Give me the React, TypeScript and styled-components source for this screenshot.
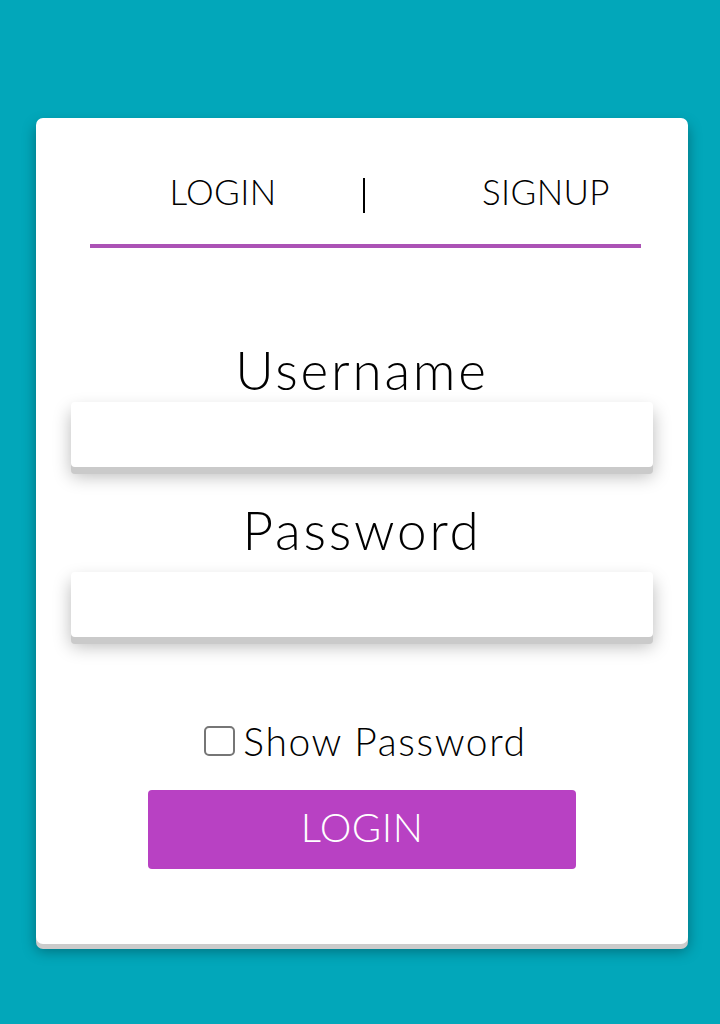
import React, { useState } from "react";
import styled, { createGlobalStyle } from "styled-components";

const Global = createGlobalStyle`
  html, body {
    margin: 0;
    padding: 0;
    background: #02a7ba;
  }
  body {
    font-family: Lato, "Noto Sans", sans-serif;
    color: #000;
  }
  * { box-sizing: border-box; }
`;

const Page = styled.div`
  min-height: 1024px;
  padding: 118px 32px 0 36px;
`;

const Card = styled.div`
  width: 652px;
  height: 826px;
  background: #fff;
  border-radius: 7px;
  box-shadow: 0 5px 0 #cbcbcb, 0 7px 14px rgba(0, 0, 0, 0.35);
  display: flex;
  flex-direction: column;
  align-items: center;
`;

const TabBar = styled.div`
  align-self: stretch;
  margin: 0 47px 0 54px;
  padding: 56px 0 31px;
  border-bottom: 4px solid #ab52b5;
  display: grid;
  grid-template-columns: 266px 2px 1fr;
  column-gap: 7px;
  align-items: start;
`;

const Tab = styled.button<{ $align: "center" | "end" }>`
  justify-self: ${(p) => p.$align};
  margin-right: ${(p) => (p.$align === "end" ? "31px" : "0")};
  padding: 0;
  border: none;
  background: none;
  font-family: inherit;
  font-weight: 300;
  font-size: 35px;
  line-height: 35px;
  letter-spacing: 0.4px;
  color: #000;
  cursor: pointer;
`;

const Divider = styled.span`
  margin-top: 4px;
  width: 2px;
  height: 35px;
  background: #000;
`;

const FieldLabel = styled.label<{ $gap: number }>`
  margin-top: ${(p) => p.$gap}px;
  font-size: 53px;
  line-height: 53px;
  font-weight: 300;
  letter-spacing: 2.8px;
`;

const Input = styled.input<{ $gap: number }>`
  margin-top: ${(p) => p.$gap}px;
  width: 582px;
  height: 65px;
  border: none;
  border-radius: 4px;
  background: #fff;
  outline: none;
  padding: 0 16px;
  font-family: inherit;
  font-size: 28px;
  box-shadow: 0 7px 0 #cacaca, 0 9px 18px rgba(0, 0, 0, 0.28);
`;

const CheckRow = styled.label`
  margin: 89px 0 0 7px;
  height: 30px;
  display: flex;
  align-items: center;
  gap: 8px;
  font-size: 39px;
  font-weight: 300;
  line-height: 30px;
  letter-spacing: 1.6px;
  cursor: pointer;
`;

const Check = styled.input`
  appearance: none;
  margin: 0;
  width: 31px;
  height: 30px;
  border: 2px solid #767676;
  border-radius: 5px;
  background: #fff;
  cursor: pointer;
  &:checked {
    background: #b841c3;
    border-color: #b841c3;
  }
`;

const SubmitButton = styled.button`
  margin-top: 34px;
  width: 428px;
  height: 79px;
  border: none;
  border-radius: 4px;
  background: #b841c3;
  color: #fff;
  font-family: inherit;
  font-size: 40px;
  font-weight: 300;
  line-height: 1;
  letter-spacing: 0.5px;
  padding: 0 0 6px;
  cursor: pointer;
`;

export default function App() {
  const [show, setShow] = useState(false);
  return (
    <Page>
      <Global />
      <Card>
        <TabBar>
          <Tab $align="center">LOGIN</Tab>
          <Divider />
          <Tab $align="end">SIGNUP</Tab>
        </TabBar>
        <FieldLabel $gap={95} htmlFor="username">Username</FieldLabel>
        <Input $gap={6} id="username" type="text" />
        <FieldLabel $gap={36} htmlFor="password">Password</FieldLabel>
        <Input $gap={16} id="password" type={show ? "text" : "password"} />
        <CheckRow>
          <Check type="checkbox" checked={show} onChange={(e) => setShow(e.target.checked)} />
          Show Password
        </CheckRow>
        <SubmitButton>LOGIN</SubmitButton>
      </Card>
    </Page>
  );
}
